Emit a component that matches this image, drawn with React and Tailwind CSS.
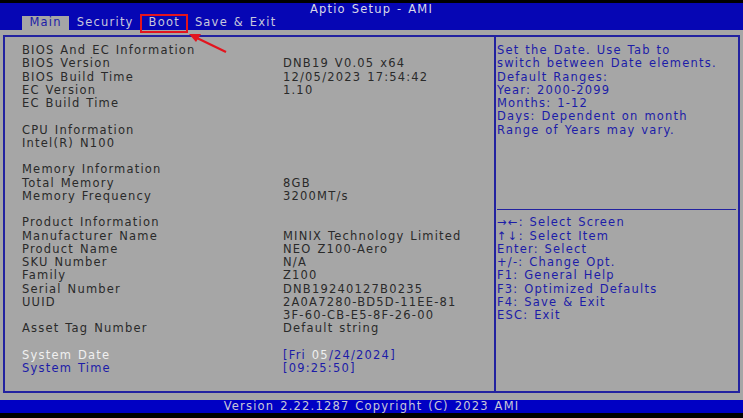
export default function App() {
  const rows = [
    ["BIOS And EC Information", ""],
    ["BIOS Version", "DNB19 V0.05 x64"],
    ["BIOS Build Time", "12/05/2023 17:54:42"],
    ["EC Version", "1.10"],
    ["EC Build Time", ""],
    ["", ""],
    ["CPU Information", ""],
    ["Intel(R) N100", ""],
    ["", ""],
    ["Memory Information", ""],
    ["Total Memory", "8GB"],
    ["Memory Frequency", "3200MT/s"],
    ["", ""],
    ["Product Information", ""],
    ["Manufacturer Name", "MINIX Technology Limited"],
    ["Product Name", "NEO Z100-Aero"],
    ["SKU Number", "N/A"],
    ["Family", "Z100"],
    ["Serial Number", "DNB19240127B0235"],
    ["UUID", "2A0A7280-BD5D-11EE-81"],
    ["", "3F-60-CB-E5-8F-26-00"],
    ["Asset Tag Number", "Default string"],
    ["", ""],
  ];

  const help = [
    "Set the Date. Use Tab to",
    "switch between Date elements.",
    "Default Ranges:",
    "Year: 2000-2099",
    "Months: 1-12",
    "Days: Dependent on month",
    "Range of Years may vary.",
  ];

  const keys = [
    "→←: Select Screen",
    "↑↓: Select Item",
    "Enter: Select",
    "+/-: Change Opt.",
    "F1: General Help",
    "F3: Optimized Defaults",
    "F4: Save & Exit",
    "ESC: Exit",
  ];

  return (
    <div className="relative w-[743px] h-[418px] overflow-hidden bg-black font-['DejaVu_Sans',sans-serif] text-[11.5px] tracking-[1.2px] [word-spacing:1px] leading-[13.25px] whitespace-pre">
      {/* top bar */}
      <div className="mt-[3px] h-[27px] bg-[#0606b4]">
        <div className="h-[13px] flex items-center justify-center text-[#d8d8e8]">Aptio Setup - AMI</div>
        <div className="h-[14px] flex pl-[22px] items-center">
          <div className="h-[14px] flex items-center px-[7.5px] bg-[#a6a6a6] text-[#1c1ca8]">Main</div>
          <div className="h-[14px] flex items-center px-[7.5px] text-[#c8c8dc]">Security</div>
          <div className="h-[14px] flex items-center px-[7.5px] text-[#c8c8dc]">Boot</div>
          <div className="h-[14px] flex items-center px-[7.5px] text-[#c8c8dc]">Save &amp; Exit</div>
        </div>
      </div>

      {/* body */}
      <div className="h-[370px] bg-[#a6a6a6] pt-[5px] px-[3px]">
        <div className="h-[358px] w-[737px] border-2 border-[#2222a0] flex">
          <div className="w-[491px] border-r-2 border-[#2222a0] pl-[17px] pt-[7px] text-[#2a2a2a]">
            {rows.map(([l, v], i) => (
              <div key={i} className="flex h-[13.25px]">
                <div className="w-[261px]">{l}</div>
                <div>{v}</div>
              </div>
            ))}
            <div className="flex h-[13.25px]">
              <div className="w-[261px] text-[#f0f0f0]">System Date</div>
              <div className="text-[#1c1ca8]">[Fri <span className="text-[#f0f0f0]">05</span>/24/2024]</div>
            </div>
            <div className="flex h-[13.25px] text-[#1c1ca8]">
              <div className="w-[261px]">System Time</div>
              <div>[09:25:50]</div>
            </div>
          </div>
          <div className="flex-1 pl-[1px] pt-[7px] text-[#1c1ca8]">
            {help.map((t, i) => (
              <div key={i} className="h-[13.25px]">{t}</div>
            ))}
            <div className="h-[66.25px]"></div>
            <div className="h-[13.25px] flex items-center pr-[2px]">
              <div className="w-full h-[1.5px] bg-[#2222a0]"></div>
            </div>
            {keys.map((t, i) => (
              <div key={i} className="h-[13.25px]">{t}</div>
            ))}
          </div>
        </div>
      </div>

      {/* footer */}
      <div className="h-[13px] bg-[#0000c4] flex items-center justify-center text-[#c8c8d8]">
        Version 2.22.1287 Copyright (C) 2023 AMI
      </div>

      {/* annotation */}
      <div className="absolute left-[140px] top-[14px] w-[48px] h-[19px] border-[2.5px] border-[#e3141e]"></div>
      <svg className="absolute left-0 top-0" width="743" height="418">
        <line x1="226" y1="52" x2="197" y2="38" stroke="#e3141e" strokeWidth="2.2" />
        <polygon points="189,34 201,34 196,42" fill="#e3141e" />
      </svg>
    </div>
  );
}
